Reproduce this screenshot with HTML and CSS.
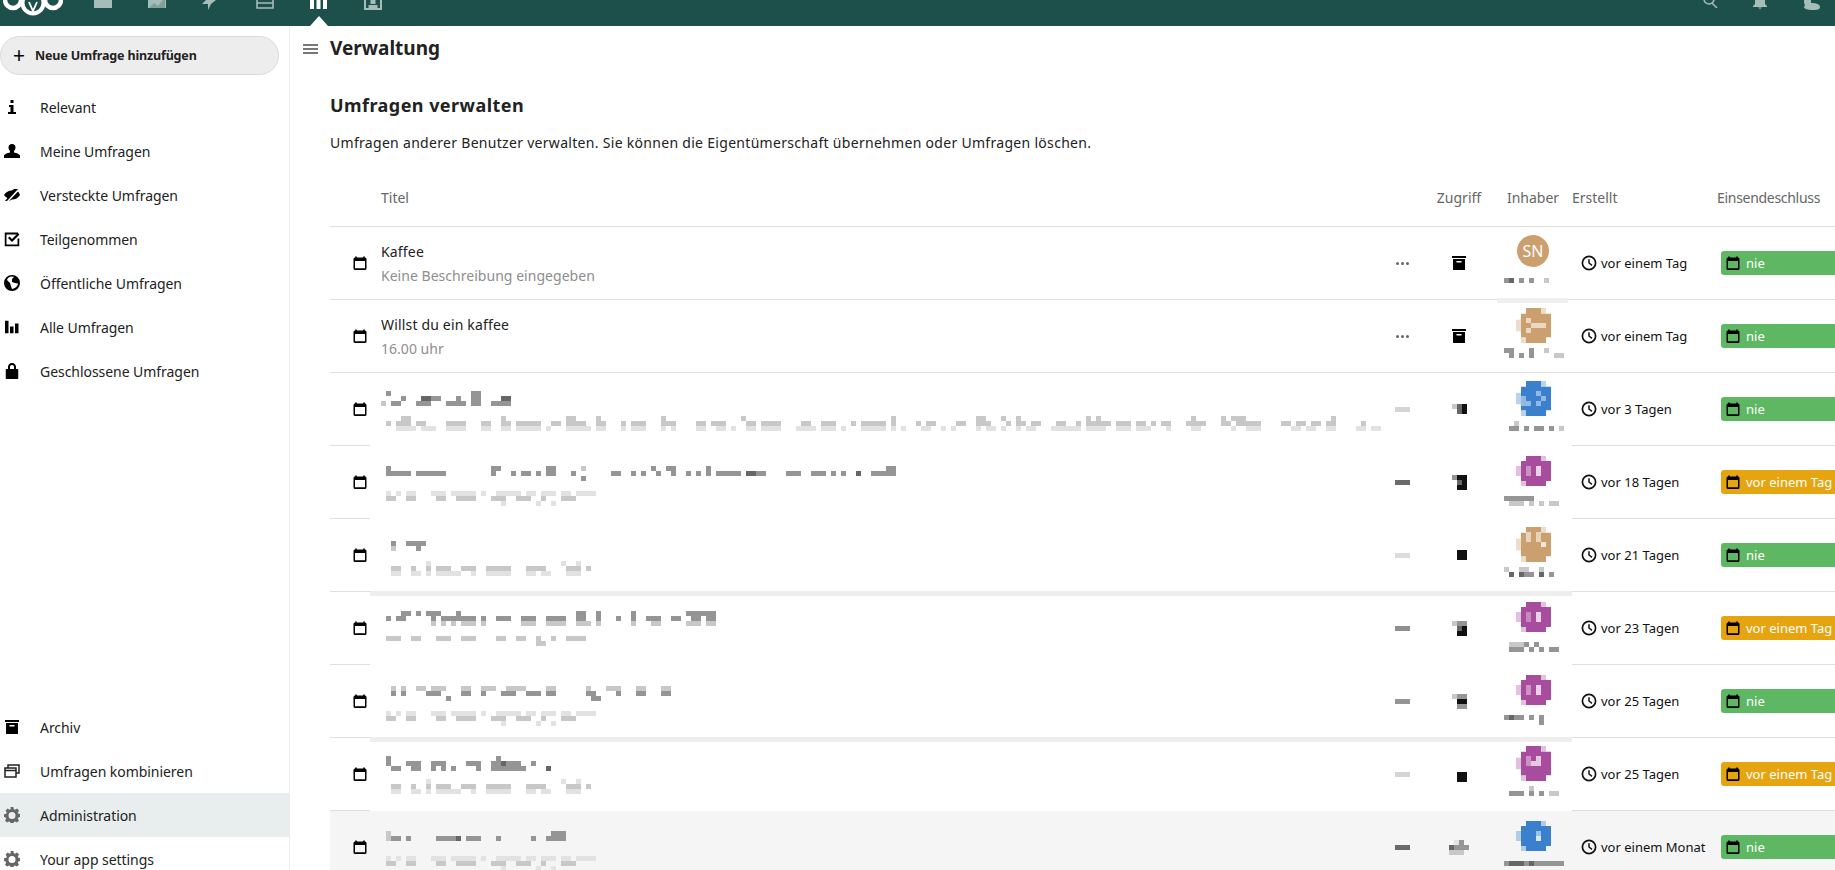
FILE: index.html
```html
<!DOCTYPE html>
<html lang="de">
<head>
<meta charset="utf-8">
<title>Umfragen verwalten</title>
<link rel="stylesheet" href="styles.css">
</head>
<body>
<svg class="defs" width="0" height="0" aria-hidden="true">
  <symbol id="cal" viewBox="0 0 14 14"><path d="M3 0.5v2M11 0.5v2" stroke="currentColor" stroke-width="1.6" fill="none"/><path fill-rule="evenodd" fill="currentColor" d="M2 1.5h10a1.5 1.5 0 0 1 1.5 1.5v9.5a1.5 1.5 0 0 1-1.5 1.5h-10a1.5 1.5 0 0 1-1.5-1.5v-9.5a1.5 1.5 0 0 1 1.5-1.5zM2 5v7.2h10V5z"/></symbol>
  <symbol id="arch" viewBox="0 0 14 14"><path fill="currentColor" fill-rule="evenodd" d="M0 0h14v2H0zM1 3h12v11H1zM4.5 5v1.5h5V5z"/></symbol>
  <symbol id="clock" viewBox="0 0 16 16"><circle cx="8" cy="8" r="6.6" fill="none" stroke="currentColor" stroke-width="1.7"/><path d="M8 4.2V8l3 2.4" fill="none" stroke="currentColor" stroke-width="1.5"/></symbol>
  <symbol id="cog" viewBox="0 0 16 16"><path fill="currentColor" fill-rule="evenodd" d="M6.6 0h2.8l.4 2.2 1.3.6L13 1.6l2 2-1.2 1.9.6 1.2 2.2.5v2.8l-2.2.4-.6 1.3 1.2 1.9-2 2-1.9-1.2-1.3.6-.4 2.2H6.6l-.4-2.2-1.3-.6L3 15.6l-2-2 1.2-1.9-.6-1.3L0 10V7.200l2.200-.5.6-1.200L1.600 3.600l2-2 1.900 1.200 1.200-.6zM8 5a3.500 3.500 0 1 0 0 7 3.500 3.500 0 0 0 0-7z"/></symbol>
  <symbol id="pixa" viewBox="0 0 35 30" preserveAspectRatio="none"><path fill="currentColor" d="M10 0h15v5h10v20h-5v5H10v-5H5V5h5z"/><path fill="currentColor" opacity=".35" d="M0 10h5v10H0zM5 25h5v5H5zM25 0h5v5h-5z"/></symbol>
  <symbol id="sub-a" viewBox="0 0 220 20"><path class="t-x" d="M5 2.500h5M15 2.500h5M25 2.500h10M50 2.500h15M70 2.500h25M100 2.500h5M115 2.500h25M145 2.500h10M160 2.500h15M180 2.500h10M195 2.500h20"/><path class="t-l" d="M5 7.500h10M25 7.500h10M55 7.500h10M75 7.500h20M110 7.500h15M135 7.500h15M160 7.500h5M180 7.500h15"/><path class="t-x" d="M120 12.500h5M155 12.500h5M170 12.500h5"/></symbol>
  <symbol id="sub-b" viewBox="0 0 220 20"><path class="t-x" d="M45 2.500h5M195 2.500h5M180 2.500h5"/><path class="t-l" d="M10 7.500h10M30 7.500h5M45 7.500h5M55 7.500h15M80 7.500h15M105 7.500h25M145 7.500h20M185 7.500h15M205 7.500h5"/><path class="t-x" d="M10 12.500h10M30 12.500h10M45 12.500h5M55 12.500h25M90 12.500h5M105 12.500h25M145 12.500h10M160 12.500h10M185 12.500h15"/></symbol>
</svg>

<header class="topbar">
  <div class="logo">
    <svg width="60" height="17" viewBox="0 0 60 17"><g fill="none" stroke="#fff" stroke-width="4.500"><circle cx="10" cy="0" r="8"/><circle cx="50" cy="0" r="8"/></g><circle cx="30" cy="3" r="10.500" fill="none" stroke="#fff" stroke-width="4"/><path d="M26 2l4 9 4-9" fill="none" stroke="#fff" stroke-width="1.800"/></svg>
  </div>
  <nav class="apps">
    <span class="app"><svg width="18" height="8"><rect width="18" height="8" fill="#a5bdb9"/></svg></span>
    <span class="app"><svg width="18" height="8"><path d="M0 0h18v8H0z" fill="#a5bdb9"/><path d="M1 8l5-5 4 3 5-6h2v8z" fill="#7fa09b"/></svg></span>
    <span class="app"><svg width="14" height="10"><path d="M4 0h10L9 4 6 10 6 4H0z" fill="#a5bdb9"/></svg></span>
    <span class="app"><svg width="18" height="9"><path d="M1 0v8h16V0M1 3h16" fill="none" stroke="#a5bdb9" stroke-width="1.600"/></svg></span>
    <span class="app app-active"><svg width="17" height="9"><path d="M0 0h4v9H0zM6.500 0h4v9h-4zM13 0h4v9h-4z" fill="#fff"/></svg></span>
    <span class="app"><svg width="18" height="10"><path d="M0 0h18v10H0z" fill="#a5bdb9"/><path d="M2 0h14v8H2z" fill="#1e504b"/><path d="M6.500 0h5v4h-5zM4.500 5h9v3h-9z" fill="#a5bdb9"/></svg></span>
  </nav>
  <div class="tools">
    <svg width="16" height="8"><circle cx="7" cy="-1" r="5" fill="none" stroke="#a5bdb9" stroke-width="1.500"/><path d="M10 3l5 5" stroke="#a5bdb9" stroke-width="1.500"/></svg>
    <svg width="14" height="9"><path d="M2 0h10v4l2 2v1H0V6l2-2zM5 7.500h4L7 9z" fill="#a5bdb9"/></svg>
    <svg width="19" height="10" viewBox="0 0 19 10"><path d="M3 0h7v3c5 0 9 1 9 4s-4 3-8 3-8-1-8-3l1-2C3 4 3 2 3 0z" fill="#a5bdb9"/></svg>
  </div>
</header>

<div class="shell">
  <aside class="side">
    <button class="new"><span class="plus">+</span>Neue Umfrage hinzufügen</button>
    <ul class="nav">
      <li class="item"><svg class="ni" width="16" height="16" viewBox="0 0 16 16"><path d="M6.500 1h3v3h-3zM5 6h4.500v7H12v2H4v-2h2.500V8H5z"/></svg>Relevant</li>
      <li class="item"><svg class="ni" width="16" height="16" viewBox="0 0 16 16"><path d="M8 1a3.500 3.500 0 0 1 3.500 3.500c0 1.500-.7 2.700-1.500 3.500v1.500c2.500.5 6 1.500 6 3.500V15H0v-2c0-2 3.500-3 6-3.500V8C5.200 7.200 4.500 6 4.500 4.500A3.500 3.500 0 0 1 8 1z"/></svg>Meine Umfragen</li>
      <li class="item"><svg class="ni" width="16" height="14" viewBox="0 0 16 14"><path d="M0 7c2-3 4.500-4.500 8-4.500L10 1l4 0-11 12-2 0 2.500-3C2.500 9.500 1 8.500 0 7zM16 7c-2 3-4.500 4.500-8 4.500l-3 1.500 9-9.500c.8.800 1.500 2 2 3.500z"/></svg>Versteckte Umfragen</li>
      <li class="item"><svg class="ni" width="15" height="15" viewBox="0 0 15 15"><path fill-rule="evenodd" d="M0 1h13.500v2H2v10h11V7h2v8H0z"/><path d="M3.500 6.500l1.500-1.500 2.500 2.500 6-6 1.500 1.500-7.500 7.500z"/></svg>Teilgenommen</li>
      <li class="item"><svg class="ni" width="16" height="16" viewBox="0 0 16 16"><path fill-rule="evenodd" d="M8 0a8 8 0 1 1 0 16A8 8 0 0 1 8 0zM3 5l3 3 1 3 1 3c3-.5 6-3 6-5.500l-3-.5-3-1V4l2-2-2-.5C5.500 1.500 3.500 3 3 5z"/></svg>Öffentliche Umfragen</li>
      <li class="item"><svg class="ni" width="14" height="13" viewBox="0 0 14 13"><path d="M0 0h3.500v13H0zM5 6h3.500v7H5zM10 3h3.500v10H10z"/></svg>Alle Umfragen</li>
      <li class="item"><svg class="ni" width="13" height="16" viewBox="0 0 13 16"><path fill-rule="evenodd" d="M6.500 0C9 0 10.500 2 10.500 4v2h1.500a1 1 0 0 1 1 1v8a1 1 0 0 1-1 1H1a1 1 0 0 1-1-1V7a1 1 0 0 1 1-1h1.500V4C2.500 2 4 0 6.500 0zM4.500 6h4V4c0-1.200-.8-2-2-2s-2 .8-2 2z"/></svg>Geschlossene Umfragen</li>
    </ul>
    <ul class="nav nav-bottom">
      <li class="item"><svg class="ni" width="14" height="14"><use href="#arch"/></svg>Archiv</li>
      <li class="item"><svg class="ni ni-line" width="16" height="14" viewBox="0 0 16 14"><path fill="none" stroke="#222" stroke-width="1.500" d="M4 3.500V1h11v8h-2.500M1 4h11v9H1zM1 6.500h11"/></svg>Umfragen kombinieren</li>
      <li class="item item-active"><svg class="ni ni-gray" width="16" height="16"><use href="#cog"/></svg>Administration</li>
      <li class="item"><svg class="ni ni-gray" width="16" height="16"><use href="#cog"/></svg>Your app settings</li>
    </ul>
  </aside>

  <main class="main">
    <div class="crumb">
      <span class="burger"><i></i><i></i><i></i></span>
      <h1>Verwaltung</h1>
    </div>
    <h2>Umfragen verwalten</h2>
    <p class="lead">Umfragen anderer Benutzer verwalten. Sie können die Eigentümerschaft übernehmen oder Umfragen löschen.</p>

    <div class="table">
      <div class="row head">
        <span></span><span>Titel</span><span></span>
        <span class="c">Zugriff</span><span class="c">Inhaber</span><span class="h-created">Erstellt</span><span class="h-due">Einsendeschluss</span>
      </div>

      <div class="row">
        <svg class="rowcal"><use href="#cal"/></svg>
        <div class="ptext"><div class="ptitle">Kaffee</div><div class="psub">Keine Beschreibung eingegeben</div></div>
        <span class="dots"><i></i><i></i><i></i></span>
        <svg class="acc"><use href="#arch"/></svg>
        <div class="owner owner-tall">
          <span class="avatar">SN</span>
          <svg class="oname" width="62" height="10"><path class="t-m" d="M0 2.500h10M15 2.500h5M25 2.500h5"/><path class="t-d" d="M5 2.500h5"/><path class="t-l" d="M40 2.500h5"/></svg>
        </div>
        <div class="created"><svg class="clk"><use href="#clock"/></svg>vor einem Tag</div>
        <div class="badge green"><svg class="bcal"><use href="#cal"/></svg>nie</div>
        <span class="strip-owner"></span>
      </div>

      <div class="row">
        <svg class="rowcal"><use href="#cal"/></svg>
        <div class="ptext"><div class="ptitle">Willst du ein kaffee</div><div class="psub">16.00 uhr</div></div>
        <span class="dots"><i></i><i></i><i></i></span>
        <svg class="acc"><use href="#arch"/></svg>
        <div class="owner owner-tall">
          <svg class="pixav tan" width="35" height="35" viewBox="0 0 35 35"><use href="#pixa" width="35" height="35"/><path fill="#fff" opacity=".6" d="M10 10h5v5h-5zM15 15h5v5h-5zM25 15h5v5h-5zM20 15h5v5h-5zM10 20h5v5h-5z"/></svg>
          <svg class="oname" width="62" height="15"><path class="t-m" d="M0 2.500h10M5 7.500h5M25 2.500h5M25 7.500h5M15 7.500h5"/><path class="t-l" d="M40 2.500h5M50 7.500h10"/></svg>
        </div>
        <div class="created"><svg class="clk"><use href="#clock"/></svg>vor einem Tag</div>
        <div class="badge green"><svg class="bcal"><use href="#cal"/></svg>nie</div>
      </div>

      <div class="row masked">
        <svg class="rowcal"><use href="#cal"/></svg>
        <svg class="blur" width="1000" height="46"><path class="t-m" d="M5 5.500h5M90 5.500h10"/><path class="t-m" d="M20 10.500h5M40 10.500h20M75 10.500h5M90 10.500h10M120 10.500h10"/><path class="t-d" d="M40 10.500h10M120 10.500h10"/><path class="t-l" d="M0 15.500h5"/><path class="t-m" d="M10 15.500h10M35 15.500h15M65 15.500h20M90 15.500h10M110 15.500h20"/><path class="t-l" d="M20 30.500h10M120 30.500h5M185 30.500h10M215 30.500h5M280 30.500h5M360 30.500h5M510 30.500h5M595 30.500h10M620 30.500h5M635 30.500h5M705 30.500h5M715 30.500h5M810 30.500h5M840 30.500h5M850 30.500h15M950 30.500h5"/><path class="t-l" d="M5 35.500h5M15 35.500h15M35 35.500h10M65 35.500h20M100 35.500h10M120 35.500h10M135 35.500h25M170 35.500h10M185 35.500h20M215 35.500h10M240 35.500h5M250 35.500h15M280 35.500h15M315 35.500h10M330 35.500h15M365 35.500h10M380 35.500h20M420 35.500h10M440 35.500h15M470 35.500h5M480 35.500h25M510 35.500h5M535 35.500h5M545 35.500h10M575 35.500h10M595 35.500h15M625 35.500h5M635 35.500h10M650 35.500h10M675 35.500h10M695 35.500h5M705 35.500h25M735 35.500h15M755 35.500h10M770 35.500h5M780 35.500h10M805 35.500h20M840 35.500h10M855 35.500h25M900 35.500h10M915 35.500h10M930 35.500h10M945 35.500h10M980 35.500h5"/><path class="t-x" d="M15 40.500h20M40 40.500h15M65 40.500h20M100 40.500h10M120 40.500h10M135 40.500h25M165 40.500h5M185 40.500h25M215 40.500h10M240 40.500h5M250 40.500h15M280 40.500h5M290 40.500h5M315 40.500h10M335 40.500h10M350 40.500h5M365 40.500h10M380 40.500h20M415 40.500h20M440 40.500h15M460 40.500h5M480 40.500h25M510 40.500h5M520 40.500h5M540 40.500h10M560 40.500h5M570 40.500h5M595 40.500h5M605 40.500h10M620 40.500h5M635 40.500h5M645 40.500h10M670 40.500h30M705 40.500h20M735 40.500h15M755 40.500h15M785 40.500h5M810 40.500h10M850 40.500h5M865 40.500h15M910 40.500h10M925 40.500h10M945 40.500h10M975 40.500h10M990 40.500h10"/></svg>
        <span class="bar" data-tone="a"></span>
        <svg class="acc-blur" width="15" height="10"><path class="t-l" d="M0 2.500h5"/><path class="t-d" d="M5 2.500h5M5 7.500h10"/><path class="t-k" d="M10 2.500h5M10 7.500h5"/></svg>
        <div class="owner owner-tall">
          <svg class="pixav blue" width="35" height="35" viewBox="0 0 35 35"><use href="#pixa" width="35" height="35"/><path fill="#fff" opacity=".45" d="M5 15h5v10H5zM10 20h5v5h-5zM20 10h5v5h-5zM20 20h5v5h-5zM25 15h5v5h-5z"/></svg>
          <svg class="oname" width="62" height="15"><path class="t-l" d="M10 2.500h5"/><path class="t-m" d="M5 7.500h10M20 7.500h5M30 7.500h10M45 7.500h5"/><path class="t-l" d="M55 7.500h5"/></svg>
        </div>
        <div class="created"><svg class="clk"><use href="#clock"/></svg>vor 3 Tagen</div>
        <div class="badge green"><svg class="bcal"><use href="#cal"/></svg>nie</div>
      </div>

      <div class="row masked">
        <svg class="rowcal"><use href="#cal"/></svg>
        <svg class="blur" width="530" height="46"><path class="t-m" d="M5 7.500h5M110 7.500h10M165 7.500h10M270 7.500h5M285 7.500h10M325 7.500h5M505 7.500h10"/><path class="t-l" d="M200 7.500h5"/><path class="t-m" d="M5 12.500h25M35 12.500h30M110 12.500h5M130 12.500h5M140 12.500h10M155 12.500h5M165 12.500h10M190 12.500h5M230 12.500h10M250 12.500h5M260 12.500h5M275 12.500h5M290 12.500h5M305 12.500h5M315 12.500h5M325 12.500h5M335 12.500h25M365 12.500h20M405 12.500h15M430 12.500h15M450 12.500h5M460 12.500h5M475 12.500h5M490 12.500h25"/><path class="t-d" d="M365 12.500h10M475 12.500h5"/><path class="t-m" d="M200 17.500h5"/><use href="#sub-a" width="220" height="20" y="30"/></svg>
        <span class="bar" data-tone="d"></span>
        <svg class="acc-blur" width="15" height="15"><path class="t-m" d="M0 2.500h5"/><path class="t-k" d="M5 2.500h10M10 7.500h5M5 12.500h10"/><path class="t-d" d="M5 7.500h5"/></svg>
        <div class="owner">
          <svg class="pixav purple" width="35" height="35" viewBox="0 0 35 35"><use href="#pixa" width="35" height="30"/><path fill="#fff" opacity=".4" d="M10 10h5v10h-5z"/><path fill="#fff" opacity=".75" d="M20 10h5v10h-5z"/></svg>
          <svg class="oname" width="62" height="10"><path class="t-m" d="M0 2.500h30"/><path class="t-l" d="M5 7.500h15M25 7.500h5M35 7.500h5M45 7.500h10"/></svg>
        </div>
        <div class="created"><svg class="clk"><use href="#clock"/></svg>vor 18 Tagen</div>
        <div class="badge orange"><svg class="bcal"><use href="#cal"/></svg>vor einem Tag</div>
      </div>

      <div class="row strip">
        <svg class="rowcal"><use href="#cal"/></svg>
        <svg class="blur" width="230" height="46"><path class="t-m" d="M10 9.500h5M25 9.500h20"/><path class="t-l" d="M10 14.500h5"/><path class="t-m" d="M35 14.500h5"/><use href="#sub-b" width="220" height="20" y="27"/></svg>
        <span class="bar" data-tone="b"></span>
        <svg class="acc-blur" width="15" height="10"><path class="t-k" d="M5 2.500h10M5 7.500h10"/></svg>
        <div class="owner owner-tall">
          <svg class="pixav tan" width="35" height="35" viewBox="0 0 35 35"><use href="#pixa" width="35" height="35"/><path fill="#fff" opacity=".55" d="M10 5h5v10h-5zM20 5h5v10h-5z"/><path fill="#fff" opacity=".75" d="M25 15h5v5h-5z"/></svg>
          <svg class="oname" width="62" height="15"><path class="t-l" d="M0 2.500h5M15 2.500h10M35 2.500h5"/><path class="t-d" d="M5 7.500h5M15 7.500h5M35 7.500h5"/><path class="t-m" d="M20 7.500h10M45 7.500h5"/></svg>
        </div>
        <div class="created"><svg class="clk"><use href="#clock"/></svg>vor 21 Tagen</div>
        <div class="badge green"><svg class="bcal"><use href="#cal"/></svg>nie</div>
      </div>

      <div class="row masked">
        <svg class="rowcal"><use href="#cal"/></svg>
        <svg class="blur" width="340" height="46"><path class="t-m" d="M20 6.500h10M35 6.500h5M45 6.500h15M75 6.500h5M195 6.500h10M215 6.500h5M250 6.500h5M305 6.500h30"/><path class="t-m" d="M5 11.500h5M15 11.500h10M50 11.500h5M60 11.500h35M100 11.500h5M115 11.500h15M140 11.500h15M165 11.500h20M195 11.500h10M215 11.500h5M235 11.500h5M250 11.500h5M265 11.500h15M290 11.500h10M310 11.500h10M325 11.500h10"/><path class="t-l" d="M50 16.500h5M60 16.500h5M70 16.500h5M80 16.500h15M100 16.500h5M140 16.500h15M165 16.500h20M195 16.500h15M215 16.500h5M250 16.500h5M270 16.500h10M305 16.500h15M325 16.500h10"/><path class="t-l" d="M5 31.500h15M30 31.500h10M55 31.500h15M80 31.500h15M115 31.500h10M135 31.500h10M155 31.500h5M170 31.500h5M185 31.500h20"/><path class="t-l" d="M155 36.500h10"/></svg>
        <span class="bar" data-tone="c"></span>
        <svg class="acc-blur" width="15" height="15"><path class="t-l" d="M0 2.500h5"/><path class="t-m" d="M5 2.500h10"/><path class="t-d" d="M5 7.500h5"/><path class="t-k" d="M10 7.500h5M5 12.500h10"/></svg>
        <div class="owner">
          <svg class="pixav purple" width="35" height="35" viewBox="0 0 35 35"><use href="#pixa" width="35" height="30"/><path fill="#fff" opacity=".35" d="M10 10h5v10h-5z"/><path fill="#fff" opacity=".75" d="M20 10h5v10h-5z"/></svg>
          <svg class="oname" width="62" height="10"><path class="t-l" d="M5 2.500h15"/><path class="t-m" d="M20 2.500h5M30 2.500h5"/><path class="t-m" d="M5 7.500h15M25 7.500h5M35 7.500h5M45 7.500h10"/></svg>
        </div>
        <div class="created"><svg class="clk"><use href="#clock"/></svg>vor 23 Tagen</div>
        <div class="badge orange"><svg class="bcal"><use href="#cal"/></svg>vor einem Tag</div>
      </div>

      <div class="row strip">
        <svg class="rowcal"><use href="#cal"/></svg>
        <svg class="blur" width="300" height="46"><path class="t-l" d="M10 8.500h5M20 8.500h5M35 8.500h10M50 8.500h15M80 8.500h10M100 8.500h15M125 8.500h20M165 8.500h10M205 8.500h5M225 8.500h15M255 8.500h10M280 8.500h10"/><path class="t-m" d="M10 13.500h5M20 13.500h5M45 13.500h15M80 13.500h10M100 13.500h5M120 13.500h15M145 13.500h15M165 13.500h10M205 13.500h5M210 13.500h5M235 13.500h5M255 13.500h10M280 13.500h10"/><path class="t-m" d="M65 18.500h5M210 18.500h10"/><use href="#sub-a" width="220" height="20" y="31"/></svg>
        <span class="bar" data-tone="m"></span>
        <svg class="acc-blur" width="15" height="15"><path class="t-l" d="M0 2.500h5"/><path class="t-m" d="M5 2.500h10M5 12.500h10"/><path class="t-k" d="M5 7.500h10"/></svg>
        <div class="owner">
          <svg class="pixav purple" width="35" height="35" viewBox="0 0 35 35"><use href="#pixa" width="35" height="30"/><path fill="#fff" opacity=".4" d="M10 10h5v10h-5z"/><path fill="#fff" opacity=".75" d="M20 10h5v10h-5z"/></svg>
          <svg class="oname" width="62" height="15"><path class="t-m" d="M0 2.500h20M25 2.500h5M35 2.500h5M35 7.500h5"/><path class="t-d" d="M5 2.500h5"/></svg>
        </div>
        <div class="created"><svg class="clk"><use href="#clock"/></svg>vor 25 Tagen</div>
        <div class="badge green"><svg class="bcal"><use href="#cal"/></svg>nie</div>
      </div>

      <div class="row masked">
        <svg class="rowcal"><use href="#cal"/></svg>
        <svg class="blur" width="230" height="46"><path class="t-m" d="M5 5.500h5M115 5.500h5"/><path class="t-m" d="M5 10.500h5M25 10.500h15M50 10.500h15M85 10.500h15M110 10.500h30M150 10.500h5"/><path class="t-m" d="M10 15.500h10M30 15.500h10M50 15.500h5M60 15.500h5M70 15.500h5M95 15.500h5M110 15.500h35M165 15.500h5"/><path class="t-d" d="M165 15.500h5M120 10.500h5"/><use href="#sub-b" width="220" height="20" y="26"/></svg>
        <span class="bar" data-tone="a"></span>
        <svg class="acc-blur" width="15" height="15"><path class="t-k" d="M5 7.500h10M5 12.500h10"/></svg>
        <div class="owner owner-tall">
          <svg class="pixav purple" width="35" height="35" viewBox="0 0 35 35"><use href="#pixa" width="35" height="35"/><path fill="#fff" opacity=".4" d="M10 10h5v10h-5z"/><path fill="#fff" opacity=".7" d="M20 10h5v10h-5zM15 15h5v5h-5z"/></svg>
          <svg class="oname" width="62" height="15"><path class="t-l" d="M25 2.500h5M45 7.500h10"/><path class="t-m" d="M5 7.500h15M25 7.500h5M35 7.500h5"/></svg>
        </div>
        <div class="created"><svg class="clk"><use href="#clock"/></svg>vor 25 Tagen</div>
        <div class="badge orange"><svg class="bcal"><use href="#cal"/></svg>vor einem Tag</div>
      </div>

      <div class="row hover">
        <svg class="rowcal"><use href="#cal"/></svg>
        <svg class="blur" width="230" height="46"><path class="t-m" d="M170 7.500h15"/><path class="t-l" d="M5 7.500h5M5 12.500h5"/><path class="t-m" d="M10 12.500h10M25 12.500h5M55 12.500h20M85 12.500h15M115 12.500h5M150 12.500h5M165 12.500h20"/><path class="t-d" d="M75 12.500h5"/><use href="#sub-a" width="220" height="20" y="30"/></svg>
        <span class="bar" data-tone="d"></span>
        <svg class="acc-blur" width="20" height="15"><path class="t-x" d="M5 2.500h5"/><path class="t-m" d="M10 2.500h5"/><path class="t-d" d="M0 7.500h5"/><path class="t-m" d="M5 7.500h15"/><path class="t-l" d="M0 12.500h5M5 12.500h10"/></svg>
        <div class="owner">
          <svg class="pixav blue" width="35" height="35" viewBox="0 0 35 35"><use href="#pixa" width="35" height="30"/><path fill="#fff" opacity=".5" d="M20 10h5v5h-5z"/><path fill="#fff" opacity=".8" d="M20 15h5v5h-5z"/></svg>
          <svg class="oname" width="62" height="10"><path class="t-m" d="M0 2.500h60"/><path class="t-d" d="M5 2.500h15M25 2.500h5"/></svg>
        </div>
        <div class="created"><svg class="clk"><use href="#clock"/></svg>vor einem Monat</div>
        <div class="badge green"><svg class="bcal"><use href="#cal"/></svg>nie</div>
      </div>
    </div>
  </main>
</div>
</body>
</html>
```

FILE: styles.css
```css
* { box-sizing: border-box; }
html, body { margin: 0; height: 870px; overflow: hidden; background: #fff; }
body { font-family: "Noto Sans", "Open Sans", sans-serif; font-size: 14px; color: #222; }
.defs { position: absolute; }
ul { list-style: none; margin: 0; padding: 0; }

.topbar { height: 26px; background: #1e504b; display: flex; align-items: flex-start; }
.logo { width: 94px; padding-left: 3px; }
.logo svg { display: block; }
.apps { display: flex; gap: 36px; }
.app { position: relative; display: block; width: 18px; line-height: 0; }
.app-active::after {
  content: ""; position: absolute; left: 0; top: 16px;
  border: 9px solid transparent; border-top: 0; border-bottom: 10px solid #fff;
}
.tools { margin-left: auto; display: flex; gap: 36px; padding-right: 15px; line-height: 0; }
.tools svg:nth-child(1) { margin-right: -1px; }
.tools svg:nth-child(2) { margin-right: -2px; }

.shell { display: flex; height: 855px; }
.side { width: 290px; flex: none; border-right: 1px solid #ededed; display: flex; flex-direction: column; padding-top: 10px; }
.new {
  display: flex; align-items: center; width: 279px; height: 39px; padding: 0 0 0 6px;
  background: #ededed; border: 1px solid #dbdbdb; border-radius: 20px;
  font: 700 12.500px "Noto Sans", sans-serif; letter-spacing: -.15px; color: #222;
}
.plus { width: 28px; font-size: 21px; font-weight: 400; line-height: 1; color: #000; text-align: left; padding-left: 6px; }
.nav { margin-top: 10px; }
.nav-bottom { margin-top: auto; }
.item { display: flex; align-items: center; height: 44px; padding-left: 40px; position: relative; letter-spacing: -.05px; }
.item-active { background: #e8eded; }
.ni { position: absolute; left: 12px; top: 50%; transform: translate(-50%, -50%); color: #000; fill: #000; }
.ni-gray { color: #666; fill: #666; }
.ni-line { fill: none; }

.main { flex: 1; min-width: 0; padding-left: 40px; }
.crumb { display: flex; align-items: center; height: 44px; position: relative; }
.burger { position: absolute; left: -27px; top: 18px; width: 15px; display: flex; flex-direction: column; gap: 2px; }
.burger i { display: block; height: 2px; background: #777; }
h1 { margin: 0; font-size: 19px; font-weight: 700; line-height: 44px; color: #222; }
h2 { margin: 20px 0 0; font-size: 18px; font-weight: 700; line-height: 30px; letter-spacing: .45px; }
.lead { margin: 13px 0 0; line-height: 20px; letter-spacing: .3px; }

.table { margin-top: 13px; width: 1505px; }
.row {
  display: grid; grid-template-columns: 51px 994px 54px 60px 88px 140px 118px;
  align-items: center; height: 73px; border-bottom: 1px solid #dedede; position: relative;
}
.head { height: 61px; padding-top: 2px; color: #666; }
.h-due { letter-spacing: -.3px; }
.c { text-align: center; }
.h-created { margin-left: -5px; }
.hover { background: #f5f5f5; }
.masked::after, .strip::after {
  content: ""; position: absolute; left: 40px; width: 1202px; bottom: -1px; height: 1px; background: #fff;
}
.strip::after { bottom: -5px; height: 5px; background: #eee; }
.rowcal { width: 14px; height: 14px; justify-self: start; margin-left: 23px; color: #000; }
.ptext { padding-top: 3px; letter-spacing: .17px; }
.ptitle { line-height: 22px; }
.psub { line-height: 26px; color: #8e8e8e; letter-spacing: .03px; }
.dots { display: flex; gap: 2px; justify-content: center; }
.dots i { width: 3px; height: 3px; border-radius: 50%; background: #666; }
.acc { width: 14px; height: 14px; justify-self: center; color: #000; }
.acc-blur { justify-self: center; }
.owner { display: flex; flex-direction: column; align-items: center; height: 72px; padding-top: 10px; position: relative; }
.owner-tall { padding-top: 8px; }
.avatar { width: 32px; height: 32px; border-radius: 50%; background: #cb9f6e; color: #fff; text-align: center; line-height: 32px; font-size: 16px; margin-bottom: 11px; }
.pixav { display: block; margin-bottom: 5px; height: 35px; }
.oname { display: block; margin-left: 4px; overflow: visible; }
.tan { color: #cb9f6e; }
.blue { color: #3a80cc; }
.purple { color: #a84c9d; }
.created { display: flex; align-items: center; gap: 4px; padding-left: 4px; font-size: 13px; color: #111; white-space: nowrap; }
.clk { width: 16px; height: 16px; color: #111; flex: none; }
.badge { display: flex; align-items: center; gap: 6px; margin-left: 4px; height: 24px; width: 130px; padding-left: 5px; border-radius: 3px; color: #fff; font-size: 13px; white-space: nowrap; }
.bcal { width: 14px; height: 14px; color: #000; flex: none; }
.green { background: #5eb763; }
.orange { background: #e6a410; }
.bar { justify-self: center; width: 15px; height: 5px; background: #d5d5d5; }
.bar[data-tone="a"] { background: #d5d5d5; }
.bar[data-tone="b"] { background: #dcdcdc; }
.bar[data-tone="c"] { background: #8f8f8f; }
.bar[data-tone="d"] { background: #686b6a; }
.bar[data-tone="m"] { background: #959595; }
.strip-owner { position: absolute; left: 1167px; width: 71px; bottom: -4px; height: 5px; background: #efefef; }

.blur { display: block; overflow: visible; margin-top: 4px; }
.blur path, .oname path, .acc-blur path, symbol path[class] { fill: none; stroke-width: 5; shape-rendering: crispEdges; }
.t-k { stroke: #111; }
.t-d { stroke: #666; }
.t-m { stroke: #959595; }
.t-l { stroke: #c8c8c8; }
.t-x { stroke: #e2e2e2; }
```
